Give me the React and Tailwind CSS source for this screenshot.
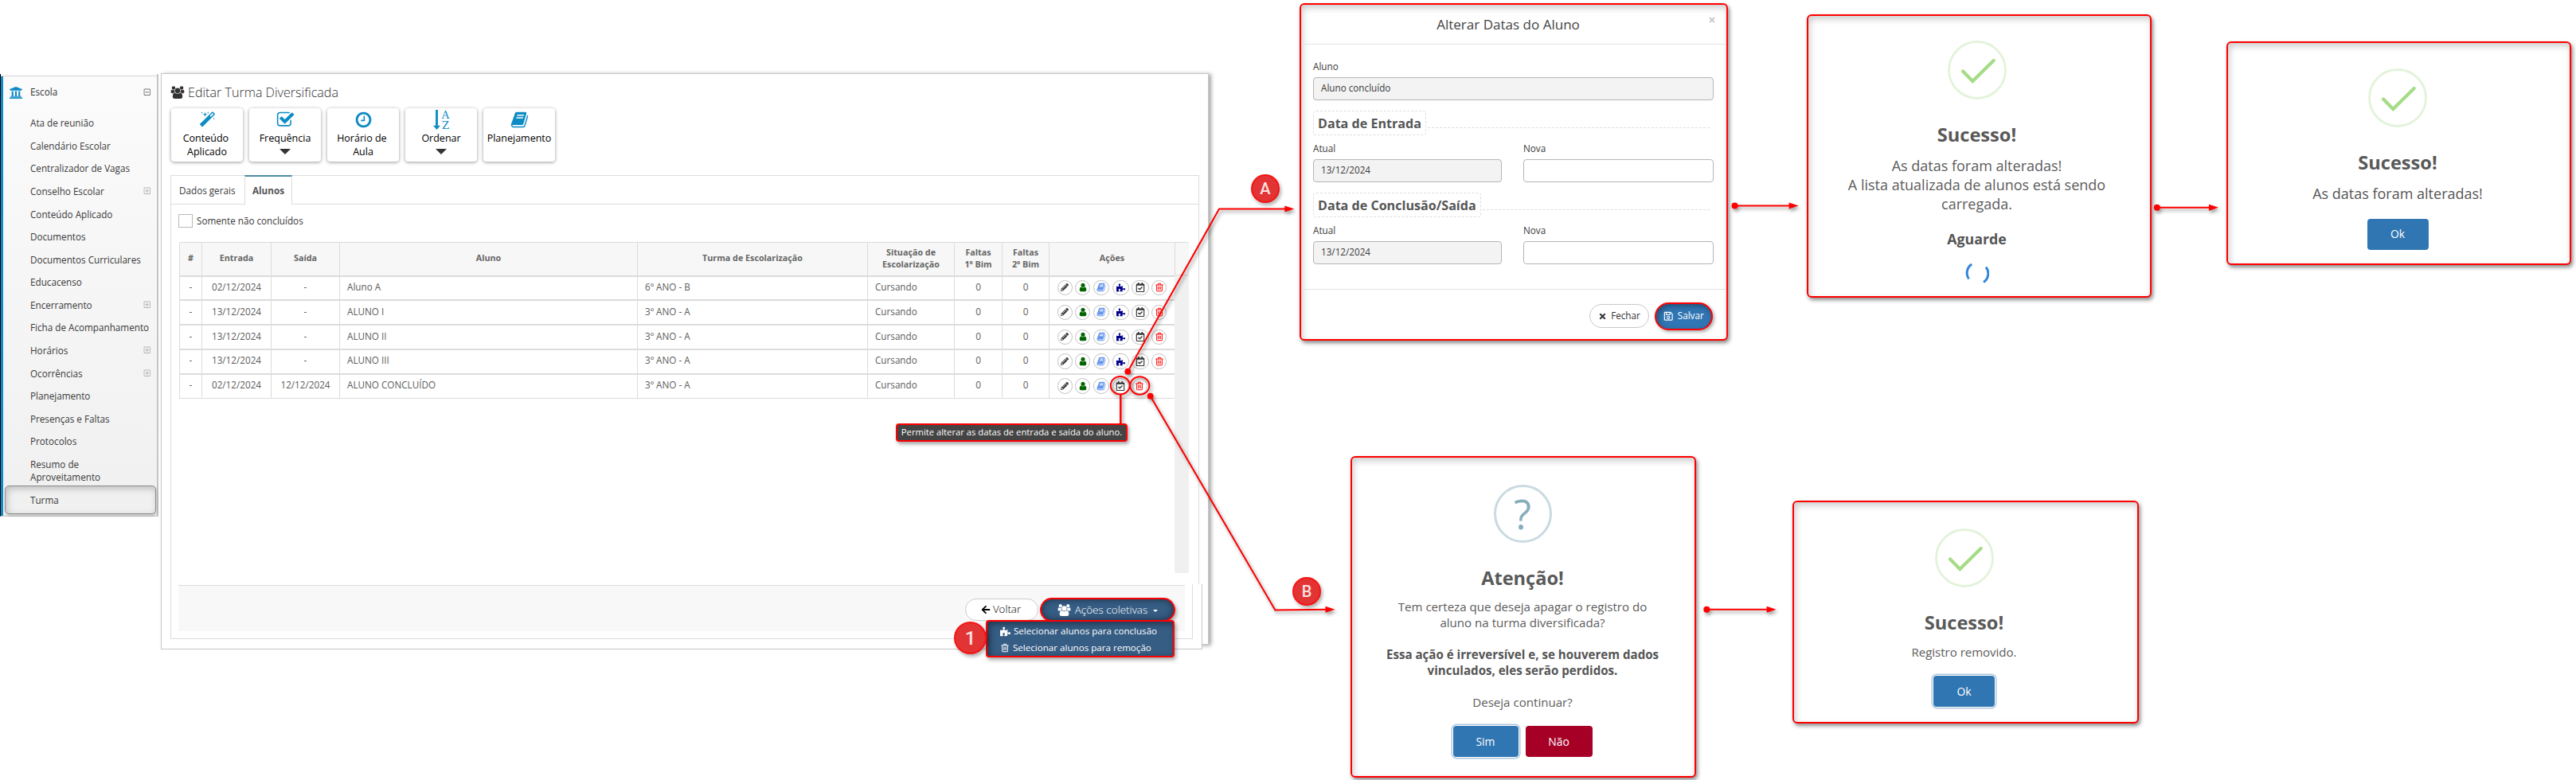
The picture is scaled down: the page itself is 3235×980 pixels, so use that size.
import {
    FaUniversity, FaPencilAlt, FaPuzzlePiece, FaRegCalendarCheck, FaArrowLeft, FaTimes, FaRegSave,
    FaRegPlusSquare, FaRegMinusSquare,
} from 'react-icons/fa';

// Itens do menu lateral da Escola
const menuItems = [
    { label: 'Ata de reunião' },
    { label: 'Calendário Escolar' },
    { label: 'Centralizador de Vagas' },
    { label: 'Conselho Escolar', expandable: true },
    { label: 'Conteúdo Aplicado' },
    { label: 'Documentos' },
    { label: 'Documentos Curriculares' },
    { label: 'Educacenso' },
    { label: 'Encerramento', expandable: true },
    { label: 'Ficha de Acompanhamento' },
    { label: 'Horários', expandable: true },
    { label: 'Ocorrências', expandable: true },
    { label: 'Planejamento' },
    { label: 'Presenças e Faltas' },
    { label: 'Protocolos' },
    { label: 'Resumo de Aproveitamento' },
    { label: 'Turma' },
];

// Alunos matriculados na turma diversificada
const students = [
    { entry: '02/12/2024', exit: '-', name: 'Aluno A', room: '6º ANO - B' },
    { entry: '13/12/2024', exit: '-', name: 'ALUNO I', room: '3º ANO - A' },
    { entry: '13/12/2024', exit: '-', name: 'ALUNO II', room: '3º ANO - A' },
    { entry: '13/12/2024', exit: '-', name: 'ALUNO III', room: '3º ANO - A' },
    { entry: '02/12/2024', exit: '12/12/2024', name: 'ALUNO CONCLUÍDO', room: '3º ANO - A', done: true },
];

const ICONS = {
    users: 'M657 896q-162 5-265 128h-134q-82 0-138-40.5t-56-118.5q0-353 124-353 6 0 43.5 21t97.5 42.5 119 21.5q67 0 133-23-5 37-5 66 0 139 81 256zm1071 637q0 120-73 189.5t-194 69.5h-874q-121 0-194-69.5t-73-189.5q0-53 3.5-103.5t14-109 26.5-108.5 43-97.5 62-81 85.5-53.5 111.5-20q10 0 43 21.5t73 48 107 48 135 21.5 135-21.5 107-48 73-48 43-21.5q61 0 111.5 20t85.5 53.5 62 81 43 97.5 26.5 108.5 14 109 3.5 103.5zm-1024-1277q0 106-75 181t-181 75-181-75-75-181 75-181 181-75 181 75 75 181zm704 384q0 159-112.5 271.5t-271.5 112.5-271.5-112.5-112.5-271.5 112.5-271.5 271.5-112.5 271.5 112.5 112.5 271.5zm576 225q0 78-56 118.5t-138 40.5h-134q-103-123-265-128 81-117 81-256 0-29-5-66 66 23 133 23 59 0 119-21.5t97.5-42.5 43.5-21q124 0 124 353zm-128-609q0 106-75 181t-181 75-181-75-75-181 75-181 181-75 181 75 75 181z',
    magic: 'M1254 581l293-293-107-107-293 293zm447-293q0 27-18 45l-1286 1286q-18 18-45 18t-45-18l-198-198q-18-18-18-45t18-45l1286-1286q18-18 45-18t45 18l198 198q18 18 18 45zm-1351-190l98 30-98 30-30 98-30-98-98-30 98-30 30-98zm350 162l196 60-196 60-60 196-60-196-196-60 196-60 60-196zm930 478l98 30-98 30-30 98-30-98-98-30 98-30 30-98zm-640-640l98 30-98 30-30 98-30-98-98-30 98-30 30-98z',
    check: 'M1472 930v318q0 119-84.5 203.5t-203.5 84.5h-832q-119 0-203.5-84.5t-84.5-203.5v-832q0-119 84.5-203.5t203.5-84.5h832q63 0 117 25 15 7 18 23 3 17-9 29l-49 49q-10 10-23 10-3 0-9-2-23-6-45-6h-832q-66 0-113 47t-47 113v832q0 66 47 113t113 47h832q66 0 113-47t47-113v-254q0-13 9-22l64-64q10-10 23-10 6 0 12 3 20 8 20 29zm231-489l-814 814q-24 24-57 24t-57-24l-430-430q-24-24-24-57t24-57l110-110q24-24 57-24t57 24l263 263 647-647q24-24 57-24t57 24l110 110q24 24 24 57t-24 57z',
    clock: 'M1024 544v448q0 14-9 23t-23 9h-320q-14 0-23-9t-9-23v-64q0-14 9-23t23-9h224v-352q0-14 9-23t23-9h64q14 0 23 9t9 23zm416 352q0-148-73-273t-198-198-273-73-273 73-198 198-73 273 73 273 198 198 273 73 273-73 198-198 73-273zm224 0q0 209-103 385.5t-279.5 279.5-385.5 103-385.5-103-279.5-279.5-103-385.5 103-385.5 279.5-279.5 385.5-103 385.5 103 279.5 279.5 103 385.5z',
    book: 'M1703 478q40 57 18 129l-275 906q-19 64-76.5 107.5t-122.5 43.5h-923q-77 0-148.5-53.5t-99.5-131.5q-24-67-2-127 0-4 3-27t4-37q1-8-3-21.5t-3-19.5q2-11 8-21t16.5-23.5 16.5-23.5q23-38 45-91.5t30-91.5q3-10 .5-30t-.5-28q3-11 17-28t17-23q21-36 42-92t25-90q1-9-2.5-32t.5-28q4-13 22-30.5t22-22.5q19-26 42.5-84.5t27.5-96.5q1-8-3-25.5t-2-26.5q2-8 9-18t18-23 17-21q8-12 16.5-30.5t15-35 16-36 19.5-32 26.5-23.5 36-11.5 47.5 5.5l-1 3q38-9 51-9h761q74 0 114 56t18 130l-274 906q-36 119-71.5 153.5t-128.5 34.5h-869q-27 0-38 15-11 16-1 43 24 70 144 70h923q29 0 56-15.5t35-41.5l300-987q7-22 5-57 38 15 59 43zm-1064 2q-4 13 2 22.5t20 9.5h608q13 0 25.5-9.5t16.5-22.5l21-64q4-13-2-22.5t-20-9.5h-608q-13 0-25.5 9.5t-16.5 22.5zm-83 256q-4 13 2 22.5t20 9.5h608q13 0 25.5-9.5t16.5-22.5l21-64q4-13-2-22.5t-20-9.5h-608q-13 0-25.5 9.5t-16.5 22.5z',
    user: 'M1536 1399q0 109-62.5 187t-150.5 78h-854q-88 0-150.5-78t-62.5-187q0-85 8.5-160.5t31.5-152 58.5-131 94-89 134.5-34.5q131 128 313 128t313-128q76 0 134.5 34.5t94 89 58.5 131 31.5 152 8.5 160.5zm-256-887q0 159-112.5 271.5t-271.5 112.5-271.5-112.5-112.5-271.5 112.5-271.5 271.5-112.5 271.5 112.5 112.5 271.5z',
    trash: 'M704 736v576q0 14-9 23t-23 9h-64q-14 0-23-9t-9-23v-576q0-14 9-23t23-9h64q14 0 23 9t9 23zm256 0v576q0 14-9 23t-23 9h-64q-14 0-23-9t-9-23v-576q0-14 9-23t23-9h64q14 0 23 9t9 23zm256 0v576q0 14-9 23t-23 9h-64q-14 0-23-9t-9-23v-576q0-14 9-23t23-9h64q14 0 23 9t9 23zm128 724v-948h-896v948q0 22 7 40.5t14.5 27 10.5 8.5h832q3 0 10.5-8.5t14.5-27 7-40.5zm-672-1076h448l-48-117q-7-9-17-11h-317q-10 2-17 11zm928 32v64q0 14-9 23t-23 9h-96v948q0 83-47 143.5t-113 60.5h-832q-66 0-113-58.5t-47-141.5v-952h-96q-14 0-23-9t-9-23v-64q0-14 9-23t23-9h309l70-167q15-37 54-63t79-26h320q40 0 79 26t54 63l70 167h309q14 0 23 9t9 23z',
};

function Icon({ name, className }) {
    return (
        <svg viewBox={name === 'users' ? '0 0 2048 1792' : '0 0 1792 1792'} className={className} fill="currentColor">
            <path d={ICONS[name]} />
        </svg>
    );
}

function Sidebar() {
    return (
        <aside className="absolute left-0 top-[93px] flex h-[556px] w-[199px] flex-col border-r-2 border-b border-l border-[#c4c4c4] border-l-black bg-linear-to-b from-[#fbfbfb] to-[#f0f0f0]">
            <div className="h-[3px] border-b border-[#d8d8d8]" />
            <div className="flex-1 border-l-[3px] border-[#0d8bc4]">
                <div className="flex h-10 items-center pl-[7px] pr-[8px] text-[11.7px] text-[#333]">
                    <FaUniversity className="h-[17px] w-[18px] text-[#0d8bc4]" />
                    <span className="ml-[9px] flex-1">Escola</span>
                    <FaRegMinusSquare className="size-[9.5px] text-[#777]" />
                </div>
                <ul className="mt-[4.1px]">
                    {menuItems.map((item) => (
                        <li key={item.label} className="flex items-center py-[6.15px] pl-[34px] pr-[8px] text-[11.7px] leading-[16.3px] text-[#3a3a3a]">
                            <span className={item.label.startsWith('Resumo') ? 'w-[110px]' : 'flex-1 whitespace-nowrap'}>{item.label}</span>
                            {item.expandable && <FaRegPlusSquare className="size-[9.5px] text-[#b5b5b5]" />}
                        </li>
                    ))}
                </ul>
            </div>
            {/* Destaque do item Turma */}
            <div className="absolute left-[5px] top-[517px] h-[36px] w-[190px] rounded-[5px] border-[1.5px] border-[#8c8c8c] shadow-[inset_2px_3px_8px_rgba(0,0,0,0.22),1px_2px_3px_rgba(0,0,0,0.2)]" />
        </aside>
    );
}

function ToolCard({ icon, children, arrow }) {
    return (
        <div className="flex h-[67px] w-[90px] flex-col items-center rounded-[4px] bg-white pt-[4px] text-center text-[12.5px] leading-[17.7px] text-black shadow-[0_1px_4px_rgba(0,0,0,0.4)]">
            <div className="flex h-[21px] items-center text-[#0d8bc4]">{icon}</div>
            <div className="mt-[3.5px]">{children}</div>
            {arrow && (
                <svg viewBox="0 0 14 7" className="mt-[5px] h-[7px] w-[14px] fill-[#333]">
                    <path d="M0 0h14L7 7z" />
                </svg>
            )}
        </div>
    );
}

function SortAlphaIcon() {
    return (
        <div className="flex items-center gap-[2px]">
            <svg viewBox="0 0 10 28" className="h-[27px] w-[9px] fill-current">
                <path d="M3.4 0h3.2v22H10L5 28 0 22h3.4z" />
            </svg>
            <div className="flex flex-col text-center font-['DejaVu_Serif'] text-[13px] leading-[13px]">
                <span>A</span>
                <span>Z</span>
            </div>
        </div>
    );
}

function RoundButton({ className, children }) {
    return (
        <span className={`flex h-[19.5px] items-center justify-center rounded-full border border-[#c2c2c2] bg-white ${className}`}>
            {children}
        </span>
    );
}

function RowActions({ done }) {
    return (
        <div className="flex items-center gap-[3.4px] pl-[9.5px] pt-[2px]">
            <RoundButton className="w-[19.5px]"><FaPencilAlt className="size-[10px] text-[#333]" /></RoundButton>
            <RoundButton className="w-[19px]"><Icon name="user" className="size-[12px] text-[#006400]" /></RoundButton>
            <RoundButton className="w-[20.5px]"><Icon name="book" className="size-[12px] text-[#6495ed]" /></RoundButton>
            {!done && <RoundButton className="w-[21px]"><FaPuzzlePiece className="size-[11px] text-[#00008b]" /></RoundButton>}
            <RoundButton className="w-[21.5px]"><FaRegCalendarCheck className="size-[12px] text-[#333]" /></RoundButton>
            <RoundButton className="w-[19.5px]"><Icon name="trash" className="size-[12px] text-[#f00]" /></RoundButton>
        </div>
    );
}

function StudentTable() {
    const grid = 'grid grid-cols-[28px_87px_86px_374px_289px_109px_60px_59px_158px]';
    const head = 'flex items-center justify-center border-l border-[#dcdcdc]';
    const cell = 'flex items-center border-l border-[#dcdcdc] pb-[3px]';
    return (
        <div className="flex w-[1269px] text-[11.7px] text-[#5c5c5c]">
            <div>
                <div className={`${grid} h-[42px] rounded-tl-[3px] border-t border-[#dcdcdc] bg-[#f7f7f7] text-center text-[10.75px] font-bold leading-[15.3px] text-[#666]`}>
                    <div className={head}>#</div>
                    <div className={head}>Entrada</div>
                    <div className={head}>Saída</div>
                    <div className={head}>Aluno</div>
                    <div className={head}>Turma de Escolarização</div>
                    <div className={head}>Situação de<br />Escolarização</div>
                    <div className={head}>Faltas<br />1º Bim</div>
                    <div className={head}>Faltas<br />2º Bim</div>
                    <div className={head}>Ações</div>
                </div>
                {students.map((s) => (
                    <div key={s.name} className={`${grid} h-[30.9px] border-t-2 border-[#dcdcdc]`}>
                        <div className={`${cell} justify-center`}>-</div>
                        <div className={`${cell} justify-center`}>{s.entry}</div>
                        <div className={`${cell} justify-center`}>{s.exit}</div>
                        <div className={`${cell} pl-[9px]`}>{s.name}</div>
                        <div className={`${cell} pl-[9px]`}>{s.room}</div>
                        <div className={`${cell} pl-[9px]`}>Cursando</div>
                        <div className={`${cell} justify-center`}>0</div>
                        <div className={`${cell} justify-center`}>0</div>
                        <div className={cell}><RowActions done={s.done} /></div>
                    </div>
                ))}
                <div className="h-px bg-[#dcdcdc]" />
            </div>
            {/* Trilho da barra de rolagem */}
            <div className="flex h-[416px] w-[18px] flex-col">
                <div className="h-[42px] rounded-tr-[3px] border-t border-b border-l border-[#dcdcdc] bg-[#f7f7f7]" />
                <div className="flex-1 rounded-b-[2px] bg-[#f0f0f0]" />
            </div>
        </div>
    );
}

function MainPanel() {
    return (
        <>
            <section className="absolute left-[202px] top-[92px] h-[718px] w-[1316px] border border-[#c8c8c8] bg-white pl-[11px] pr-[11px] shadow-[3px_1px_5px_rgba(0,0,0,0.35)]">
                <h1 className="mt-[12px] flex h-[22px] items-center gap-[4px] text-[16.1px] font-light text-[#333]">
                    <Icon name="users" className="h-[16px] w-[18px] text-[#333]" />
                    Editar Turma Diversificada
                </h1>
                <div className="mt-[9px] flex gap-[8px] pl-[1px]">
                    <ToolCard icon={<Icon name="magic" className="size-[21px]" />}>Conteúdo&nbsp;<br />Aplicado</ToolCard>
                    <ToolCard icon={<Icon name="check" className="size-[23px]" />} arrow>Frequência</ToolCard>
                    <ToolCard icon={<Icon name="clock" className="size-[23px]" />}>Horário de&nbsp;<br />Aula</ToolCard>
                    <ToolCard icon={<SortAlphaIcon />} arrow>Ordenar</ToolCard>
                    <ToolCard icon={<Icon name="book" className="size-[23px]" />}>Planejamento</ToolCard>
                </div>
                <div className="mt-[17px] h-[560px] border-t border-r border-l border-[#dcdcdc]">
                    <div className="flex h-[36px] text-[11.7px] text-[#3a3a3a]">
                        <div className="flex w-[92px] items-center border-b border-[#dcdcdc] pl-[10px] pt-[3px]">Dados gerais</div>
                        <div className="-mt-px flex w-[60px] items-center justify-center border-t-2 border-r border-l border-[#dcdcdc] border-t-[#4f8ba3] font-bold text-[#555]">Alunos</div>
                        <div className="flex-1 border-b border-[#dcdcdc]" />
                    </div>
                    <div className="mt-[12px] flex items-center pl-[9px] text-[11.7px] text-[#3a3a3a]">
                        <span className="mr-[5px] h-[17px] w-[18px] border border-[#b8b8b8] bg-white" />
                        Somente não concluídos
                    </div>
                    <div className="mt-[17px] pl-[10px]">
                        <StudentTable />
                    </div>
                </div>
            </section>

            {/* Rodapé com as ações da turma */}
            <section className="absolute left-[202px] top-[734px] h-[82px] w-[1308px] border-r border-b border-l border-[#c8c8c8] bg-white pl-[11px] pr-[11px]">
                <div className="h-[69px] border-r border-b border-l border-[#dcdcdc] px-[9px] pt-[1px]">
                    <div className="flex h-[58px] items-start justify-end gap-[2px] border-t border-[#dcdcdc] bg-[#f8f8f8] pr-[12px] pt-[15px]">
                        <div className="mt-[1px] flex h-[28px] w-[92px] items-center justify-center gap-[3px] rounded-full border border-[#ccc] bg-white pr-[2px] text-[13.3px] font-light text-black">
                            <FaArrowLeft className="size-[12px]" />
                            Voltar
                        </div>
                        <div className="flex h-[30px] w-[170px] items-center justify-center rounded-full border-2 border-[#f00] bg-[#365d84] text-[13.5px] font-light text-white shadow-[inset_0_0_9px_rgba(0,0,0,0.5),2px_3px_4px_rgba(0,0,0,0.3)]">
                            <Icon name="users" className="h-[15px] w-[17px]" />
                            <span className="ml-[5px]">Ações coletivas</span>
                            <svg viewBox="0 0 6 3" className="ml-[7px] mt-[3px] h-[3px] w-[6px] fill-white">
                                <path d="M0 0h6L3 3z" />
                            </svg>
                        </div>
                    </div>
                </div>
            </section>

            {/* Menu aberto de ações coletivas */}
            <div className="absolute left-[1238px] top-[779px] flex h-[47px] w-[237px] flex-col gap-[5.4px] rounded-[4px] border-2 border-[#f00] bg-[#365d84] pl-[16px] pt-[4px] text-[11.6px] font-medium leading-[16px] text-white shadow-[inset_3px_3px_8px_rgba(0,0,0,0.4),2px_3px_5px_rgba(0,0,0,0.35)]">
                <div className="flex items-center gap-[4px]"><FaPuzzlePiece className="size-[13px]" />Selecionar alunos para conclusão</div>
                <div className="flex items-center gap-[4px]"><Icon name="trash" className="size-[12px]" />Selecionar alunos para remoção</div>
            </div>
        </>
    );
}

const frame = 'absolute rounded-[6px] border-2 border-[#f00] bg-white shadow-[inset_2px_4px_9px_rgba(0,0,0,0.2),2px_3px_5px_rgba(0,0,0,0.45)]';

function Field({ label, value, className }) {
    return (
        <div className={className}>
            <div className="h-[16px] leading-[16px]">{label}</div>
            <div className={`mt-[6px] flex h-[28.5px] items-center rounded-[4px] border border-[#b5b5b5] pl-[9px] ${value ? 'bg-[#f3f3f3]' : 'bg-white'}`}>
                {value}
            </div>
        </div>
    );
}

function Legend({ children }) {
    return (
        <div className="mt-[13.5px] flex h-[30.5px]">
            <div className="flex items-center whitespace-nowrap rounded-[4px] border border-dashed border-[#dedede] px-[5px] pt-[2px] text-[16.1px] font-bold text-[#555]">{children}</div>
            <div className="ml-[2px] mr-[5px] mt-[21px] h-0 flex-1 border-t border-dashed border-[#dedede]" />
        </div>
    );
}

function DatesModal() {
    return (
        <div className={`${frame} left-[1632px] top-[4px] h-[424px] w-[538px] text-[11.7px] text-[#3a3a3a]`}>
            <div className="relative flex h-[50px] items-center justify-center border-b border-[#e2e2e2] pr-[14px] text-[17.05px] text-[#444]">
                Alterar Datas do Aluno
                <FaTimes className="absolute right-[13px] top-[14px] size-[10px] text-[#c4c4c4]" />
            </div>
            <div className="h-[308px] border-b border-[#e2e2e2] pl-[15px] pr-[16px] pt-[19px]">
                <Field label="Aluno" value="Aluno concluído" />
                <Legend>Data de Entrada</Legend>
                <div className="mt-[8.5px] flex gap-[27px]">
                    <Field label="Atual" value="13/12/2024" className="w-[237px]" />
                    <Field label="Nova" className="flex-1" />
                </div>
                <Legend>Data de Conclusão/Saída</Legend>
                <div className="mt-[8.5px] flex gap-[27px]">
                    <Field label="Atual" value="13/12/2024" className="w-[237px]" />
                    <Field label="Nova" className="flex-1" />
                </div>
            </div>
            <div className="flex items-center justify-end gap-[7px] pr-[17px] pt-[15.5px] text-[#333]">
                <div className="flex h-[29.5px] w-[75px] items-center justify-center gap-[5px] rounded-full border border-[#c8c8c8]">
                    <FaTimes className="size-[11px]" />
                    Fechar
                </div>
                <div className="flex h-[35px] w-[73px] items-center justify-center gap-[5px] rounded-full border-2 border-[#f00] bg-[#3076b4] text-white shadow-[inset_2px_3px_7px_rgba(0,0,0,0.35),2px_2px_4px_rgba(0,0,0,0.35)]">
                    <FaRegSave className="size-[12.5px]" />
                    Salvar
                </div>
            </div>
        </div>
    );
}

function SuccessMark() {
    return (
        <svg viewBox="0 0 74 74" className="size-[74px] shrink-0" fill="none">
            <circle cx="37" cy="37" r="35.5" stroke="#e3f3da" strokeWidth="2.8" />
            <path d="M19 38.5 31.3 51 57.7 25" stroke="#a5dc86" strokeWidth="4.2" strokeLinecap="round" />
        </svg>
    );
}

function AlertTitle({ children }) {
    return <h2 className="mt-[28px] h-[32px] text-[23.6px] font-bold leading-[32px] text-[#595959]">{children}</h2>;
}

function AlertButton({ className, children }) {
    return (
        <div className={`flex h-[39px] items-center justify-center rounded-[4px] text-[13.9px] text-white ${className}`}>{children}</div>
    );
}

const focusRing = 'shadow-[0_0_0_1px_#fff,0_0_0_2.5px_#b0c8dd]';

// Marcador numerado ou alfabético sobre a tela
function Badge({ className, children }) {
    return (
        <div className={`absolute flex items-center justify-center rounded-full border-2 border-[#f81414] bg-[#e23434] font-['Roboto'] font-medium text-[#fbe3e3] shadow-[2px_3px_4px_rgba(0,0,0,0.3)] ${className}`}>
            {children}
        </div>
    );
}

function Connectors() {
    const arrows = [
        { x1: 2178.5, x2: 2258.6, y: 258.5 },
        { x1: 2708.8, x2: 2786, y: 260.7 },
        { x1: 2143.3, x2: 2230.6, y: 765.7 },
    ];
    return (
        <svg viewBox="0 0 3235 980" className="pointer-events-none absolute left-0 top-0 h-[980px] w-[3235px] drop-shadow-[2px_3px_2px_rgba(0,0,0,0.4)]" fill="none" stroke="#f00" strokeWidth="2">
            <path d="M1416.3 466.7 1531 262.6H1615" />
            <path d="M1444.7 497.7 1601.4 766.5 1667 765.7" />
            <path d="M1407.3 496V532" strokeWidth="2.5" />
            <ellipse cx="1406.8" cy="484.3" rx="12" ry="11.3" />
            <ellipse cx="1431.3" cy="484.5" rx="12" ry="11.3" />
            <g fill="#f00" stroke="none">
                <path d="M1625.3 262.6l-12-4v8z" />
                <path d="M1676.5 765.7l-12-4v8z" />
                <circle cx="1416.3" cy="466.7" r="3.9" />
                <circle cx="1444.7" cy="497.7" r="3.9" />
            </g>
            {arrows.map((a) => (
                <g key={a.x1}>
                    <path d={`M${a.x1} ${a.y}H${a.x2 - 9}`} />
                    <circle cx={a.x1} cy={a.y} r="4" fill="#f00" stroke="none" />
                    <path d={`M${a.x2} ${a.y}l-12-4v8z`} fill="#f00" stroke="none" />
                </g>
            ))}
        </svg>
    );
}

export default function App() {
    return (
        <div className="relative h-[980px] w-[3235px] overflow-hidden bg-white font-['Open_Sans',sans-serif]">
            <Sidebar />
            <MainPanel />
            <DatesModal />

            {/* Confirmação com carregamento da lista */}
            <div className={`${frame} left-[2269px] top-[18px] flex h-[356px] w-[433px] flex-col items-center pr-[6px] pt-[31px] text-center text-[18px] leading-[24px] text-[#5c5c5c]`}>
                <SuccessMark />
                <AlertTitle>Sucesso!</AlertTitle>
                <p className="mt-[10.5px] whitespace-nowrap">As datas foram alteradas!<br />A lista atualizada de alunos está sendo<br />carregada.</p>
                <p className="mt-[20px] text-[17.8px] font-bold text-[#555]">Aguarde</p>
                <svg viewBox="0 0 30 30" className="mt-[16px] size-[30px]" fill="none" stroke="#2f86dc" strokeWidth="3">
                    <path d="M8.2 4A13 13 0 0 0 4.5 22.5" />
                    <path d="M26 7.6A13 13 0 0 1 23 26.5" />
                </svg>
            </div>

            <div className={`${frame} left-[2796px] top-[52px] flex h-[281px] w-[433px] flex-col items-center pr-[3px] pt-[32px] text-center text-[18px] leading-[24px] text-[#555]`}>
                <SuccessMark />
                <AlertTitle>Sucesso!</AlertTitle>
                <p className="mt-[10.5px]">As datas foram alteradas!</p>
                <AlertButton className="mt-[20px] w-[77px] bg-[#3076b2]">Ok</AlertButton>
            </div>

            {/* Pergunta antes de apagar o registro */}
            <div className={`${frame} left-[1696px] top-[573px] flex h-[404px] w-[434px] flex-col items-center pr-[2px] pt-[34px] text-center text-[15.1px] leading-[20px] text-[#5c5c5c]`}>
                <div className="flex size-[73px] shrink-0 items-center justify-center rounded-full border-[3px] border-[#c9dae1] text-[51px] leading-none text-[#87adbd]">?</div>
                <AlertTitle>Atenção!</AlertTitle>
                <p className="mt-[10px] whitespace-nowrap">
                    Tem certeza que deseja apagar o registro do<br />aluno na turma diversificada?<br /><br />
                    <b className="text-[#555]">Essa ação é irreversível e, se houverem dados<br />vinculados, eles serão perdidos.</b><br /><br />
                    Deseja continuar?
                </p>
                <div className="mt-[20px] flex gap-[9px]">
                    <AlertButton className={`w-[82px] bg-[#3076b2] ${focusRing}`}>Sim</AlertButton>
                    <AlertButton className="w-[84px] bg-[#a60027]">Não</AlertButton>
                </div>
            </div>

            <div className={`${frame} left-[2251px] top-[629px] flex h-[280px] w-[435px] flex-col items-center pr-[4px] pt-[33px] text-center text-[15px] leading-[20px] text-[#5c5c5c]`}>
                <SuccessMark />
                <AlertTitle>Sucesso!</AlertTitle>
                <p className="mt-[11px]">Registro removido.</p>
                <AlertButton className={`mt-[20px] w-[77px] bg-[#3076b2] ${focusRing}`}>Ok</AlertButton>
            </div>

            <Connectors />

            {/* Dica do botão de alterar datas */}
            <div className="absolute left-[1125px] top-[532px] flex h-[23px] w-[291px] items-center justify-center whitespace-nowrap rounded-[4px] border-2 border-[#f00] bg-[#444] text-[11.25px] text-white shadow-[2px_3px_4px_rgba(0,0,0,0.35)]">
                Permite alterar as datas de entrada e saída do aluno.
            </div>

            <Badge className="left-[1198px] top-[781px] size-[41px] text-[24px]">1</Badge>
            <Badge className="left-[1571px] top-[219px] size-[36px] text-[20px]">A</Badge>
            <Badge className="left-[1623px] top-[725px] size-[36px] text-[20px]">B</Badge>
        </div>
    );
}
